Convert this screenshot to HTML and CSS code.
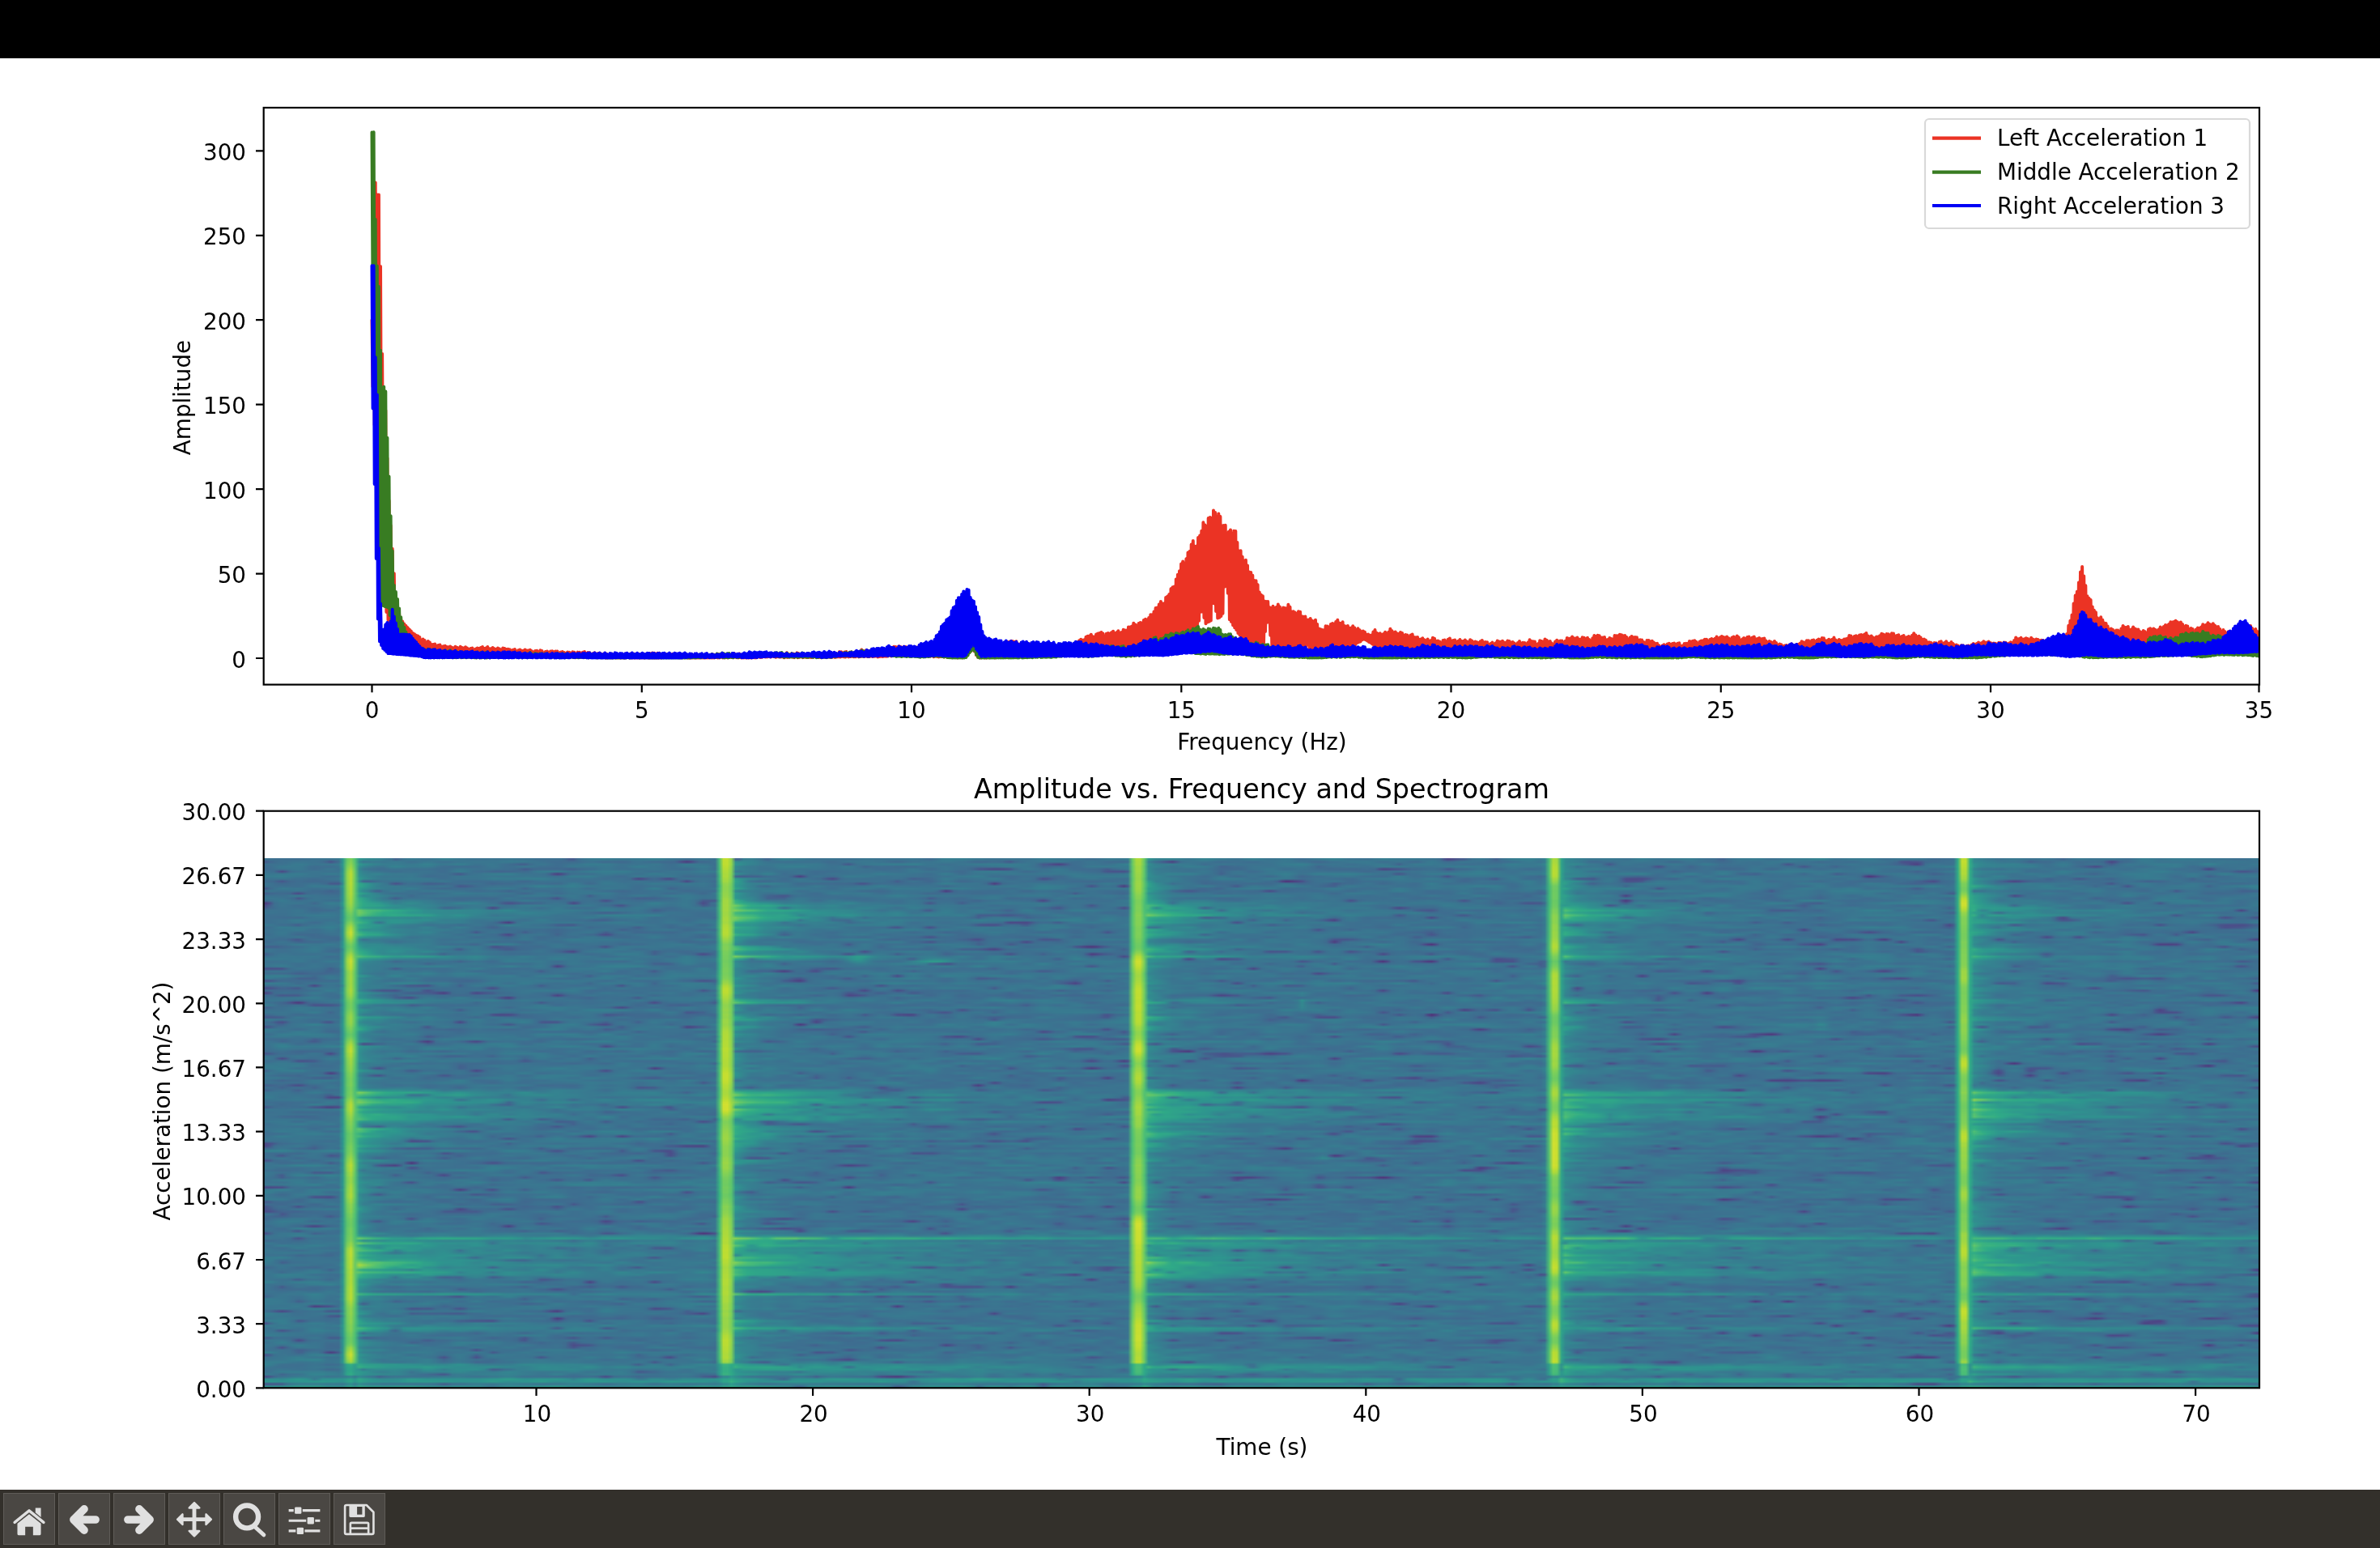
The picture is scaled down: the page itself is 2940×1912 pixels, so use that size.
FILE: index.html
```html
<!DOCTYPE html>
<html lang="en">
<head>
<meta charset="utf-8">
<title>Figure 1</title>
<link rel="stylesheet" href="styles.css">
</head>
<body>
<div class="window">
  <div class="titlebar"></div>
  <main class="figure">
    <canvas class="spectrogram" id="spec" width="493" height="218"></canvas>
    <svg class="plot" viewBox="0 72 2940 1768" xmlns="http://www.w3.org/2000/svg">
      <defs>
        <clipPath id="ax1clip"><rect x="326" y="133" width="2465" height="713"/></clipPath>
      </defs>

      <!-- top axes: amplitude spectrum -->
      <g clip-path="url(#ax1clip)">
        <path id="curve-red" class="curve red" d=""/>
        <path id="curve-green" class="curve green" d=""/>
        <path id="curve-blue" class="curve blue" d=""/>
      </g>
      <rect class="spine" x="325.7" y="133" width="2465.3" height="712.6"/>
      <path class="ticks" d="M459.5 845.6v9.7M792.8 845.6v9.7M1126 845.6v9.7M1459.3 845.6v9.7M1792.5 845.6v9.7M2125.8 845.6v9.7M2459 845.6v9.7M2790.5 845.6v9.7M325.7 813h-9.7M325.7 708.6h-9.7M325.7 604.1h-9.7M325.7 499.7h-9.7M325.7 395.2h-9.7M325.7 290.8h-9.7M325.7 186.3h-9.7"/>
      <g class="tick mid">
        <text x="459.5" y="887">0</text>
        <text x="792.8" y="887">5</text>
        <text x="1126" y="887">10</text>
        <text x="1459.3" y="887">15</text>
        <text x="1792.5" y="887">20</text>
        <text x="2125.8" y="887">25</text>
        <text x="2459" y="887">30</text>
        <text x="2790.5" y="887">35</text>
      </g>
      <g class="tick end">
        <text x="304" y="824.5">0</text>
        <text x="304" y="720.1">50</text>
        <text x="304" y="615.6">100</text>
        <text x="304" y="511.2">150</text>
        <text x="304" y="406.7">200</text>
        <text x="304" y="302.3">250</text>
        <text x="304" y="197.8">300</text>
      </g>
      <text class="tick mid" x="1559" y="926">Frequency (Hz)</text>
      <text class="tick mid" transform="translate(235 491) rotate(-90)">Amplitude</text>

      <!-- legend -->
      <rect class="legend" x="2378" y="147" width="401" height="135" rx="5"/>
      <path class="legline red-line" d="M2387 170.7h60"/>
      <path class="legline green-line" d="M2387 212.7h60"/>
      <path class="legline blue-line" d="M2387 254h60"/>
      <g class="tick">
        <text x="2467" y="180">Left Acceleration 1</text>
        <text x="2467" y="222">Middle Acceleration 2</text>
        <text x="2467" y="264">Right Acceleration 3</text>
      </g>

      <!-- bottom axes: spectrogram -->
      <rect class="spine" x="325.7" y="1001.7" width="2465.3" height="712.6"/>
      <path class="ticks" d="M662.5 1714.3v9.7M1004.1 1714.3v9.7M1345.7 1714.3v9.7M1687.3 1714.3v9.7M2028.9 1714.3v9.7M2370.5 1714.3v9.7M2712.100 1714.3v9.7M325.7 1714.3h-9.7M325.7 1635.1h-9.7M325.7 1556h-9.7M325.7 1476.8h-9.7M325.7 1397.6h-9.7M325.7 1318.4h-9.7M325.7 1239.3h-9.7M325.7 1160.1h-9.7M325.7 1080.9h-9.7M325.7 1001.7h-9.7"/>
      <g class="tick mid">
        <text x="663.5" y="1756">10</text>
        <text x="1005.1" y="1756">20</text>
        <text x="1346.7" y="1756">30</text>
        <text x="1688.3" y="1756">40</text>
        <text x="2029.9" y="1756">50</text>
        <text x="2371.5" y="1756">60</text>
        <text x="2713.1" y="1756">70</text>
      </g>
      <g class="tick end">
        <text x="304" y="1725.8">0.00</text>
        <text x="304" y="1646.6">3.33</text>
        <text x="304" y="1567.5">6.67</text>
        <text x="304" y="1488.3">10.00</text>
        <text x="304" y="1409.1">13.33</text>
        <text x="304" y="1329.9">16.67</text>
        <text x="304" y="1250.8">20.00</text>
        <text x="304" y="1171.6">23.33</text>
        <text x="304" y="1092.4">26.67</text>
        <text x="304" y="1013.2">30.00</text>
      </g>
      <text class="tick mid" x="1559" y="1796.5">Time (s)</text>
      <text class="tick mid" transform="translate(210 1360) rotate(-90)">Acceleration (m/s^2)</text>
      <text class="title" x="1558.5" y="986">Amplitude vs. Frequency and Spectrogram</text>
    </svg>
  </main>
  <nav class="toolbar">
    <button class="tool" aria-label="Home">
      <svg viewBox="0 0 64 64" class="icon">
        <path class="ln" d="M13.500 36.500 32 21.500 50.500 36.500" />
        <path class="fl" d="M40 18h7v12l-7-6z"/>
        <path class="fl" d="M32 26 47 38v13a2 2 0 0 1-2 2H37V42H27v11H19a2 2 0 0 1-2-2V38z"/>
      </svg>
    </button>
    <button class="tool" aria-label="Back">
      <svg viewBox="0 0 64 64" class="icon">
        <path class="arrow" d="M32 19.500 18.500 33 32 46.500M18.500 33H46.500"/>
      </svg>
    </button>
    <button class="tool" aria-label="Forward">
      <svg viewBox="0 0 64 64" class="icon">
        <path class="arrow" d="M32 19.500 45.500 33 32 46.500M45.500 33H17.500"/>
      </svg>
    </button>
    <button class="tool" aria-label="Pan">
      <svg viewBox="0 0 64 64" class="icon">
        <path class="shaft" d="M32 16V49M15 32.700H49"/>
        <path class="head" d="M32 11.500 38.500 18H25.500zM32 54 38.500 47.500H25.500zM10.500 32.700 17 26.200V39.200zM53.500 32.700 47 26.200V39.200z"/>
      </svg>
    </button>
    <button class="tool" aria-label="Zoom">
      <svg viewBox="0 0 64 64" class="icon">
        <circle class="lens" cx="29" cy="29.300" r="14.400"/>
        <path class="handle" d="M40 43 50.500 52.500"/>
      </svg>
    </button>
    <button class="tool" aria-label="Configure subplots">
      <svg viewBox="0 0 64 64" class="icon">
        <path class="slider" d="M12 21.300H52M12 34.300H52M12 47.300H52"/>
        <rect class="knob" x="19" y="16.300" width="10" height="10" rx="2"/>
        <rect class="knob" x="35" y="29.300" width="10" height="10" rx="2"/>
        <rect class="knob" x="21.700" y="42.300" width="10" height="10" rx="2"/>
      </svg>
    </button>
    <button class="tool" aria-label="Save">
      <svg viewBox="0 0 64 64" class="icon">
        <path class="disk" d="M15.500 14.500H41L50 23.500V49.500a2 2 0 0 1-2 2H15.500a2 2 0 0 1-2-2V16.500a2 2 0 0 1 2-2z"/>
        <path class="fl" d="M19 14H39V28a2 2 0 0 1-2 2H21a2 2 0 0 1-2-2z"/>
        <rect class="window-cut" x="29" y="16.500" width="6.500" height="10"/>
        <path class="disk" d="M20.500 51V38.500a1.500 1.500 0 0 1 1.500-1.500H42a1.500 1.500 0 0 1 1.500 1.500V51"/>
        <path class="disk" d="M20.500 44H43.500"/>
      </svg>
    </button>
  </nav>
</div>
<script src="script.js"></script>
</body>
</html>
```

FILE: styles.css
```css
* { box-sizing: border-box; }
html, body { margin: 0; padding: 0; background: #fff; }
.window { width: 2940px; height: 1912px; display: flex; flex-direction: column; overflow: hidden; }
.titlebar { height: 72px; background: #000; flex: none; }
.figure { position: relative; flex: 1; background: #fff; }
.plot { position: absolute; left: 0; top: 0; width: 2940px; height: 1768px; display: block; }
.spectrogram { position: absolute; left: 326px; top: 988px; width: 2465px; height: 654px; display: block; }

.spine { fill: none; stroke: #000; stroke-width: 2.2; }
.ticks { fill: none; stroke: #000; stroke-width: 2.2; }
.curve { fill: none; stroke-width: 4; stroke-linejoin: round; stroke-linecap: round; }
.red { stroke: #eb3324; }
.green { stroke: #387c22; }
.blue { stroke: #0000f5; }
.legend { fill: #fff; fill-opacity: .8; stroke: #d9d9d9; stroke-width: 2.2; }
.legline { fill: none; stroke-width: 4.2; }
.red-line { stroke: #eb3324; }
.green-line { stroke: #387c22; }
.blue-line { stroke: #0000f5; }

.tick { font-family: "DejaVu Sans", sans-serif; font-size: 27.78px; fill: #000; }
.mid { text-anchor: middle; }
.end { text-anchor: end; }
.title { font-family: "DejaVu Sans", sans-serif; font-size: 33.33px; fill: #000; text-anchor: middle; }

.toolbar { height: 72px; flex: none; background: #33302b; padding: 4px; display: flex; gap: 4px; }
.tool { width: 64px; height: 64px; padding: 0; margin: 0; background: #4a4743; border: 1px solid #5f5c58; display: block; }
.icon { width: 62px; height: 62px; display: block; overflow: visible; }
.fl { fill: #e0e0e0; stroke: none; }
.ln { fill: none; stroke: #e0e0e0; stroke-width: 3.5; stroke-linecap: round; stroke-linejoin: round; }
.arrow { fill: none; stroke: #e0e0e0; stroke-width: 10; stroke-linecap: round; stroke-linejoin: round; }
.shaft { fill: none; stroke: #e0e0e0; stroke-width: 5; }
.head { fill: #e0e0e0; stroke: #e0e0e0; stroke-width: 2.5; stroke-linejoin: round; }
.lens { fill: none; stroke: #e0e0e0; stroke-width: 6.6; }
.handle { fill: none; stroke: #e0e0e0; stroke-width: 5; stroke-linecap: round; }
.slider { fill: none; stroke: #e0e0e0; stroke-width: 3.3; }
.knob { fill: #e0e0e0; stroke: #4a4743; stroke-width: 1.4; }
.disk { fill: none; stroke: #e0e0e0; stroke-width: 2.7; stroke-linejoin: round; }
.window-cut { fill: #4a4743; }
```

FILE: script.js
```js
// Seeded random numbers keep the picture the same on every load.
var seed = 1234567;
function rnd() {
  seed = (seed * 1664525 + 1013904223) % 4294967296;
  return seed / 4294967296;
}
function lerp(pts, x) {
  if (x <= pts[0][0]) return pts[0][1];
  for (var i = 1; i < pts.length; i++) {
    if (x <= pts[i][0]) {
      var a = pts[i - 1], b = pts[i];
      return a[1] + (b[1] - a[1]) * (x - a[0]) / (b[0] - a[0]);
    }
  }
  return pts[pts.length - 1][1];
}
function noiseTrack(n) {
  var t = [];
  for (var i = 0; i < n; i++) t.push(rnd() * 2 - 1);
  return t;
}
function smooth(arr, t) {
  var i = Math.floor(t), u = t - i;
  u = u * u * (3 - 2 * u);
  return arr[i] * (1 - u) + arr[i + 1] * u;
}
function clamp01(v) { return Math.max(0, Math.min(1, v)); }

/* ---------- spectrum curves: [frequency Hz, amplitude] envelopes ---------- */
var RED_UP = [[0,200],[.03,281],[.07,281],[.09,274],[.14,274],[.17,202],[.21,156],[.26,145],[.3,100],[.45,32],[.55,22],[.75,15],[1,10],[1.3,7],[2,5.5],[3,4],[4,2.6],[5,2],[7,2],[8,3],[9,4.5],[10,7],[11,10],[12,7],[13,9],[13.3,13],[14,15],[14.5,24],[14.8,38],[15,52],[15.3,70],[15.6,90],[15.9,78],[16.2,60],[16.5,36],[16.65,31],[17,30],[17.4,24],[17.6,18],[18,22],[18.5,14],[19,15],[20,11],[21,10.5],[22,10],[22.5,12],[23,11],[24,9.5],[25,11],[26,10],[27,10.5],[28,11],[28.3,13],[29,11],[30,9.5],[31,10],[31.4,12],[31.55,30],[31.65,43],[31.72,57],[31.8,42],[32,26],[32.3,17],[32.5,20],[32.8,15],[33.2,16],[33.5,21],[33.8,16],[34.1,21],[34.5,17],[34.8,21],[35,16]];
var RED_LO = [[0,172],[.1,100],[.2,95],[.25,30],[.4,8],[1,2],[5,.8],[8,1],[10,2],[11,1],[11.15,6],[11.25,.5],[12,1],[13,2],[14,3.5],[14.5,8],[15,11],[15.2,17],[15.33,20],[15.36,28],[15.42,28],[15.45,21],[15.57,23],[15.59,33],[15.64,33],[15.67,24],[15.78,26],[15.8,43],[15.87,43],[15.9,24],[16.1,14],[16.3,8],[16.55,6],[16.58,22],[16.65,22],[16.68,6],[17.3,5],[17.35,9],[17.4,5],[18.2,8],[18.4,12],[18.6,8],[19,5],[22,3.5],[26,3],[30,2.5],[31.5,3],[32,10],[33,3],[35,4]];
var GREEN_UP = [[0,311],[.05,311],[.07,232],[.11,232],[.15,202],[.17,150],[.21,155],[.24,170],[.27,140],[.29,126],[.35,82],[.41,43],[.46,37],[.55,22],[.7,10],[.9,5],[2,3],[5,1.5],[9,3],[10.5,5],[11,8],[12,5],[14,6],[14.5,11],[15,15],[15.6,19],[16,12],[16.5,7],[17,4],[20,3],[25,4],[30,4],[31,5],[32,8],[32.8,7],[33,12],[33.5,12],[34,15],[34.3,12],[35,6]];
var GREEN_LO = [[0,230],[.05,180],[.12,60],[.15,32],[.3,30],[.4,15],[.55,3],[1,1],[5,.5],[10,2],[11,.5],[11.15,7],[11.25,.8],[14,2],[15,4],[16,3],[17,.8],[20,.8],[30,1],[31,3],[32,1],[34,2],[35,2]];
var BLUE_UP = [[0,232],[.04,232],[.05,178],[.09,178],[.11,82],[.16,30],[.18,14],[.28,22],[.32,12],[.37,30],[.43,22],[.5,14],[.7,14],[.8,10],[.95,5],[1.5,4],[3,2.5],[8,2.5],[9,4],[10,6],[10.4,10],[10.6,20],[10.85,32],[11.05,39],[11.2,28],[11.35,12],[11.7,9.5],[12,8.6],[13,7.8],[14,7],[14.5,11],[15,13],[15.6,14],[16,12],[16.5,7.5],[17,6],[20,6],[25,6.5],[28,7],[30,7],[31,9],[31.3,15],[31.5,14],[31.65,20],[31.72,27],[32,17],[32.5,11],[33,9],[33.7,8],[34.3,11],[34.55,18],[34.7,23],[35,10]];
var BLUE_LO = [[0,170],[.06,85],[.1,30],[.13,11],[.2,6],[.3,3],[1,1],[5,.5],[10,2],[11,1.5],[11.15,9],[11.3,1.5],[14,2],[15,3],[15.6,5],[16,3],[17,2],[20,2],[25,2],[30,2],[32,2],[33,2],[35,4]];

function buildCurve(up, lo, upWave, loWave, upWaveLen, jitter) {
  var d = [], step = 1.05, n = 0;
  var tUp = noiseTrack(400), tLo = noiseTrack(400), tFast = noiseTrack(1200);
  for (var x = 459.5; x < 2798; x += step, n++) {
    var f = (x - 459.5) / 66.6;
    var on = f > 0.9 ? 1 : 0;
    var ripple = Math.sin(x * 2 * Math.PI / 6.6);
    var v;
    if (n % 2 === 0) {
      var amp = lerp(up, f);
      var wave = upWave * Math.min(1, f / 12) * smooth(tUp, f / upWaveLen);
      var fast = smooth(tFast, f / .1) * ((f > 9 ? .9 : .25) + amp * .035);
      v = amp + on * (wave + fast + (.35 + amp * .02) * ripple) + jitter * (rnd() - .5);
    } else {
      v = lerp(lo, f) + on * (loWave * smooth(tLo, f / .35) - .4 * Math.abs(ripple)) - jitter * rnd() * .6;
    }
    d.push((n ? "L" : "M") + x.toFixed(1) + " " + (813 - 2.089 * Math.max(v, .3)).toFixed(1));
  }
  return d.join("");
}
document.getElementById("curve-red").setAttribute("d", buildCurve(RED_UP, RED_LO, 2.6, .4, .75, .5));
document.getElementById("curve-green").setAttribute("d", buildCurve(GREEN_UP, GREEN_LO, .8, .6, .3, .4));
document.getElementById("curve-blue").setAttribute("d", buildCurve(BLUE_UP, BLUE_LO, 1.2, .5, .35, .4));

/* ---------- spectrogram ---------- */
var canvas = document.getElementById("spec");
var ctx = canvas.getContext("2d");
var W = canvas.width, H = canvas.height;
var CX = 5, CY = 3, X0 = 326, Y0 = 1060;
var VIR = [[68,1,84],[72,36,117],[65,68,135],[53,95,141],[42,120,142],[33,145,140],[34,168,132],[68,191,112],[122,209,81],[189,223,38],[253,231,37]];
var ALPHA = 0.92, VEIL = [200, 200, 170];

var IMPACTS = [433, 897, 1406, 1920, 2426];
var CORE_W = [6, 10, 10, 6.5, 6];
var EVENT_GAIN = [[1,1],[1.15,1.05],[1,1],[.85,.95],[.65,1]];
// [top y, bottom y, strength, tail length px]
var BANDS = [
  [1085,1115,.09,28],[1115,1122,.17,100],[1122,1134,.25,130],[1134,1142,.16,100],[1145,1158,.15,70],
  [1168,1180,.16,80],[1180,1184,.2,130],[1235,1240,.18,90],[1255,1260,.13,50],[1268,1272,.13,25],
  [1347,1357,.25,170],[1357,1362,.14,220],[1360,1386,.19,170],[1390,1404,.2,75],[1404,1422,.07,55],[1433,1436,.1,55],[1491,1495,.1,30],
  [1527,1531,.2,500],[1531,1541,.22,210],[1541,1555,.17,200],[1555,1566,.26,150],[1566,1578,.2,210],
  [1597,1600,.17,260],[1630,1637,.11,60],[1640,1643,.27,260],[1685,1694,.18,340],[1695,1699,.08,170]
];
var SPOTS = [[1060,1185,14,5,.14],[1153,1188,22,3,.2],[1609,1238,4,9,.08],[2250,1266,8,5,.1],[1637,1429,8,3,.08],[2640,1350,30,3,.05]];

var sm = [], sm2 = [], stripes = [];
for (var r = 0; r < H; r++) {
  sm.push(noiseTrack(W / 4 + 3));
  sm2.push(noiseTrack(W / 12 + 3));
  stripes.push(rnd() * 2 - 1);
}
var gainTracks = [], rowFactor = [];
for (var ev = 0; ev < IMPACTS.length; ev++) {
  gainTracks.push(noiseTrack(H / 6 + 3));
  var rf = [];
  for (var q = 0; q < H; q++) rf.push(.6 + .7 * Math.pow(rnd(), .7));
  rowFactor.push(rf);
}

var img = ctx.createImageData(W, H);
for (var row = 0; row < H; row++) {
  var y = Y0 + (row + .5) * CY;
  for (var col = 0; col < W; col++) {
    var x = X0 + (col + .5) * CX;
    var n = .6 * smooth(sm[row], col / 4) + .4 * smooth(sm2[row], col / 12);
    var base = .35 + .065 * n + .016 * stripes[row];
    if (n < -.5) base -= (-n - .5) * .38;
    if (x < 400 && y > 1600) base += .012;
    var v = base;

    for (var e = 0; e < IMPACTS.length; e++) {
      var dt = x - IMPACTS[e];
      var g = EVENT_GAIN[e];
      var adt = Math.abs(dt);
      if (adt < 60) {
        var bottom = y > 1700 ? .5 : (y > 1684 ? .76 : 1);
        var plateau = .83 + .09 * smooth(gainTracks[e], row / 6) + .02 * rowFactor[e][row];
        var shoulder = Math.exp(-Math.pow(adt / 10.5, 6));
        var core = Math.exp(-Math.pow(adt / CORE_W[e], 4));
        var level = (.62 + (plateau - .62) * core) * bottom;
        level = Math.max(level, base);
        v = Math.max(v, base + (level - base) * shoulder);
        // soft skirt immediately to the right of the impact
        if (dt > 6 && dt < 40) v = Math.max(v, base + .13 * Math.exp(-(dt - 6) / 13) * rowFactor[e][row]);
      }
      if (dt > 9) {
        if (dt < 110 && y < 1680) v += .03 * (1 - dt / 110);
        for (var k = 0; k < BANDS.length; k++) {
          var B = BANDS[k];
          var thick = B[1] - B[0] > 6 ? 3 : 1.5;
          var w = clamp01((y - B[0] + thick) / (2 * thick)) * clamp01((B[1] - y + thick) / (2 * thick));
          if (w > 0) {
            var gain = y < 1300 ? g[0] : g[1];
            var t = (dt - 9) / B[3];
            var nearImpact = dt < 90 ? rowFactor[e][row] : (.75 + .25 * rowFactor[e][row]);
            v += w * B[2] * gain * Math.exp(-Math.pow(t, 1.25)) * nearImpact;
          }
        }
      }
    }
    // faint lines that run right across the whole record
    if (y >= 1703 && y < 1708) v += .13;
    if (y >= 1710) v += .12;
    for (var m = 0; m < SPOTS.length; m++) {
      var S = SPOTS[m];
      var dx = (x - S[0]) / S[2], dy = (y - S[1]) / S[3];
      v += S[4] * Math.exp(-(dx * dx + dy * dy));
    }

    v = Math.min(.94, Math.max(.08, v));
    var p = v * 10, i0 = Math.min(9, Math.floor(p)), fr = p - i0;
    var o = (row * W + col) * 4;
    for (var c = 0; c < 3; c++) {
      var col0 = VIR[i0][c] + (VIR[i0 + 1][c] - VIR[i0][c]) * fr;
      img.data[o + c] = col0 * ALPHA + VEIL[c] * (1 - ALPHA);
    }
    img.data[o + 3] = 255;
  }
}
ctx.putImageData(img, 0, 0);
```
